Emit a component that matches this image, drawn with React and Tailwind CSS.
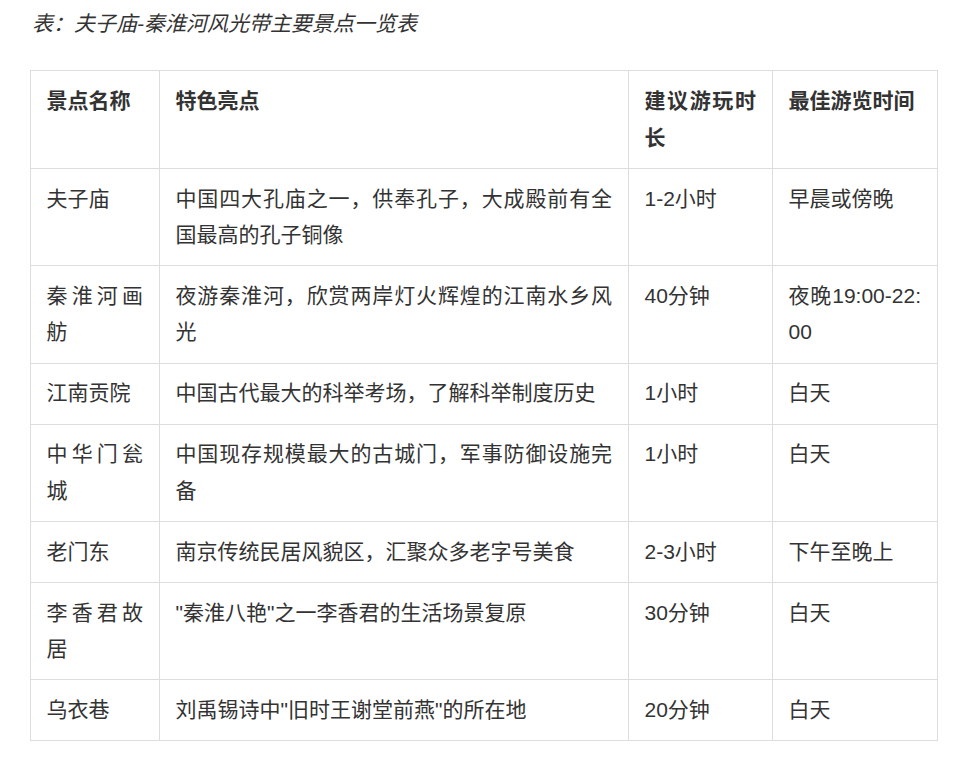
import React from "react";

const rows = [
  ["夫子庙", "中国四大孔庙之一，供奉孔子，大成殿前有全国最高的孔子铜像", "1-2小时", "早晨或傍晚"],
  ["秦淮河画舫", "夜游秦淮河，欣赏两岸灯火辉煌的江南水乡风光", "40分钟", "夜晚19:00-22:00"],
  ["江南贡院", "中国古代最大的科举考场，了解科举制度历史", "1小时", "白天"],
  ["中华门瓮城", "中国现存规模最大的古城门，军事防御设施完备", "1小时", "白天"],
  ["老门东", "南京传统民居风貌区，汇聚众多老字号美食", "2-3小时", "下午至晚上"],
  ["李香君故居", "\"秦淮八艳\"之一李香君的生活场景复原", "30分钟", "白天"],
  ["乌衣巷", "刘禹锡诗中\"旧时王谢堂前燕\"的所在地", "20分钟", "白天"],
];

const headers = ["景点名称", "特色亮点", "建议游玩时长", "最佳游览时间"];

const cell =
  "border border-[#dddddd] pl-[15.5px] pr-4 py-[11.8px] align-top text-justify break-all";

export default function App() {
  return (
    <div
      className="min-h-[763px] bg-white text-[#333333] text-[21px] leading-[36.4px]"
      style={{ fontFamily: '"Liberation Sans", "Noto Sans CJK SC", sans-serif' }}
    >
      <div className="pl-[32px] pt-[6px]">
        <p className="italic">表：夫子庙-秦淮河风光带主要景点一览表</p>
      </div>
      <div className="pl-[30px] pt-[28px]">
        <table className="table-fixed border-collapse w-[907px]">
          <colgroup>
            <col className="w-[129px]" />
            <col className="w-[469px]" />
            <col className="w-[144px]" />
            <col className="w-[165px]" />
          </colgroup>
          <thead>
            <tr>
              {headers.map((h) => (
                <th key={h} className={cell + " font-bold text-[#333333]"}>
                  {h}
                </th>
              ))}
            </tr>
          </thead>
          <tbody>
            {rows.map((r) => (
              <tr key={r[0]}>
                {r.map((c, i) => (
                  <td key={i} className={cell}>
                    {c}
                  </td>
                ))}
              </tr>
            ))}
          </tbody>
        </table>
      </div>
    </div>
  );
}
